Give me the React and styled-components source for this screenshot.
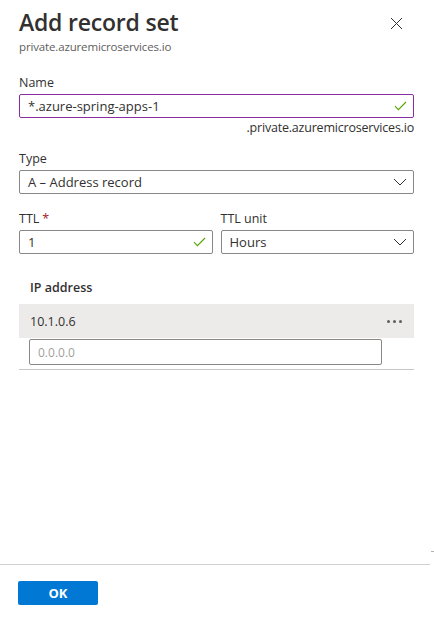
import React from 'react';
import styled, { createGlobalStyle } from 'styled-components';

const GlobalStyle = createGlobalStyle`
  html, body {
    margin: 0;
    padding: 0;
    background: #ffffff;
  }
  body {
    font-family: "Segoe UI", "Open Sans", "Noto Sans", sans-serif;
    color: #323130;
  }
`;

const Panel = styled.div`
  width: 434px;
  height: 622px;
  display: flex;
  flex-direction: column;
  box-sizing: border-box;
  position: relative;
`;

const Body = styled.div`
  flex: 1;
  padding: 0 20px 0 19px;
  display: flex;
  flex-direction: column;
`;

const Header = styled.div`
  display: flex;
  justify-content: space-between;
  align-items: flex-start;
  padding-top: 6px;
`;

const Title = styled.h1`
  margin: 0;
  font-size: 23px;
  font-weight: 600;
  line-height: 32px;
  color: #323130;
  letter-spacing: -0.2px;
`;

const Subtitle = styled.div`
  font-size: 11.5px;
  color: #605e5c;
  line-height: 16px;
  margin-top: 1px;
  letter-spacing: -0.15px;
`;

const CloseButton = styled.button`
  border: none;
  background: none;
  padding: 0;
  margin: 10px 11px 0 0;
  width: 14px;
  height: 14px;
  display: grid;
  place-items: center;
  cursor: pointer;
`;

const Field = styled.div`
  display: flex;
  flex-direction: column;
  margin-top: ${(p) => p.$top || 0}px;
  flex: ${(p) => (p.$grow ? 1 : 'none')};
`;

const Label = styled.label`
  font-size: 12.5px;
  line-height: 16px;
  color: #323130;
  margin-bottom: 3px;
`;

const Required = styled.span`
  color: #a4262c;
  margin-left: 3px;
`;

const Box = styled.div`
  height: 24px;
  box-sizing: border-box;
  border: 1px solid ${(p) => (p.$focused ? '#8a2da5' : '#8a8886')};
  border-radius: 2px;
  display: flex;
  align-items: center;
  justify-content: space-between;
  padding: 0 6px 0 8px;
  font-size: 13px;
  color: #323130;
  background: #fff;
`;

const Suffix = styled.div`
  align-self: flex-end;
  font-size: 12.5px;
  line-height: 16px;
  color: #323130;
  margin-top: 2px;
  letter-spacing: -0.2px;
`;

const Row = styled.div`
  display: flex;
  gap: 8px;
`;

const Grid = styled.div`
  margin-top: 18px;
  display: flex;
  flex-direction: column;
`;

const GridHead = styled.div`
  font-size: 12.5px;
  font-weight: 600;
  line-height: 16px;
  padding: 8px 11px;
`;

const GridRow = styled.div`
  height: 34px;
  background: #edebe9;
  display: flex;
  align-items: center;
  justify-content: space-between;
  padding: 0 12px 0 11px;
  font-size: 12.5px;
`;

const Dots = styled.span`
  display: flex;
  gap: 3px;
  & > i {
    width: 3px;
    height: 3px;
    border-radius: 50%;
    background: #605e5c;
  }
`;

const NewRow = styled.div`
  padding: 1px 0 4px 10px;
  border-bottom: 1px solid #c8c6c4;
  display: flex;
`;

const NewInput = styled(Box)`
  width: 353px;
  height: 26px;
  color: #a19f9d;
  font-size: 12px;
`;

const Footer = styled.div`
  border-top: 1px solid #d2d0ce;
  margin-right: 4px;
  height: 58px;
  padding: 16px 0 0 18px;
  box-sizing: border-box;
`;

const PrimaryButton = styled.button`
  width: 80px;
  height: 24px;
  border: none;
  border-radius: 2px;
  background: #0078d4;
  color: #fff;
  font-family: inherit;
  font-size: 13px;
  font-weight: 700;
  padding: 0;
`;

const ScrollMark = styled.div`
  position: absolute;
  right: 0;
  top: 551px;
  width: 3px;
  height: 1px;
  background: #b3b0ad;
`;

const Check = () => (
  <svg width="13" height="10" viewBox="0 0 13 10">
    <path d="M1 5.2 L4.4 8.6 L12 1" fill="none" stroke="#57a300" strokeWidth="1.1" />
  </svg>
);

const Chevron = () => (
  <svg width="14" height="8" viewBox="0 0 14 8">
    <path d="M1 1 L7 7 L13 1" fill="none" stroke="#323130" strokeWidth="1" />
  </svg>
);

const CloseIcon = () => (
  <svg width="13" height="13" viewBox="0 0 13 13">
    <path d="M1 1 L12 12 M12 1 L1 12" stroke="#323130" strokeWidth="1" />
  </svg>
);

export default function App() {
  return (
    <>
      <GlobalStyle />
      <Panel>
        <Body>
          <Header>
            <div>
              <Title>Add record set</Title>
              <Subtitle>private.azuremicroservices.io</Subtitle>
            </div>
            <CloseButton aria-label="Close">
              <CloseIcon />
            </CloseButton>
          </Header>

          <Field $top={20}>
            <Label>Name</Label>
            <Box $focused>
              <span>*.azure-spring-apps-1</span>
              <Check />
            </Box>
            <Suffix>.private.azuremicroservices.io</Suffix>
          </Field>

          <Field $top={15}>
            <Label>Type</Label>
            <Box>
              <span>A – Address record</span>
              <Chevron />
            </Box>
          </Field>

          <Row>
            <Field $top={17} $grow>
              <Label>
                TTL<Required>*</Required>
              </Label>
              <Box>
                <span>1</span>
                <Check />
              </Box>
            </Field>
            <Field $top={17} $grow>
              <Label>TTL unit</Label>
              <Box>
                <span>Hours</span>
                <Chevron />
              </Box>
            </Field>
          </Row>

          <Grid>
            <GridHead>IP address</GridHead>
            <GridRow>
              <span>10.1.0.6</span>
              <Dots>
                <i />
                <i />
                <i />
              </Dots>
            </GridRow>
            <NewRow>
              <NewInput>0.0.0.0</NewInput>
            </NewRow>
          </Grid>
        </Body>
        <Footer>
          <PrimaryButton>OK</PrimaryButton>
        </Footer>
        <ScrollMark />
      </Panel>
    </>
  );
}
